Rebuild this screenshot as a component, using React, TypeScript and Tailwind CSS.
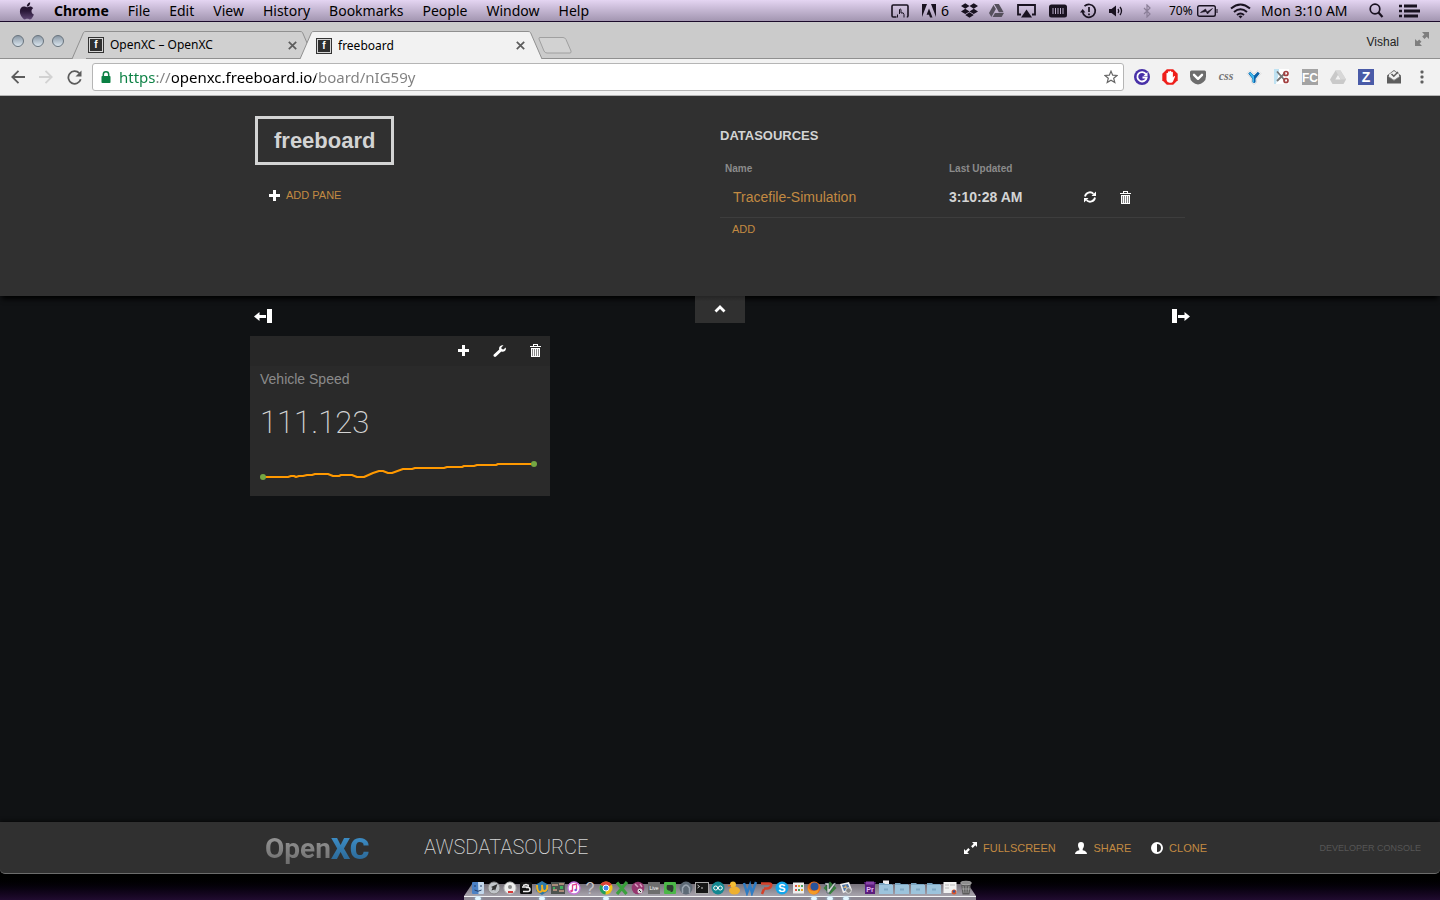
import React from "react";
import {
  SiDropbox,
  SiGoogledrive,
} from "react-icons/si";

type Kids = { children: React.ReactNode };

function Svg({ w, h, children }: Kids & { w: number; h: number }) {
  return (
    <svg width={w} height={h} viewBox={`0 0 ${w} ${h}`} className="block shrink-0" aria-hidden="true">
      {children}
    </svg>
  );
}

/* ---------- macOS menu bar ---------- */

const menus = ["File", "Edit", "View", "History", "Bookmarks", "People", "Window", "Help"];

function AppleLogo() {
  return (
    <Svg w={16} h={18}>
      <defs>
        <linearGradient id="apple" x1="0" y1="0" x2="0" y2="1">
          <stop offset="0" stopColor="#1d1226" />
          <stop offset="0.5" stopColor="#2a1838" />
          <stop offset="1" stopColor="#5d4672" />
        </linearGradient>
      </defs>
      <path
        fill="url(#apple)"
        d="M11.2 0.6c.1 1.1-.3 2.1-.9 2.8-.7.8-1.6 1.2-2.5 1.200-.1-1 .3-2 .9-2.700.7-.8 1.700-1.300 2.500-1.300zM14.200 6.300c-1.100.7-1.700 1.700-1.700 2.900 0 1.500.9 2.600 2.400 3.200-.4 1.200-1 2.300-1.700 3.300-.7.9-1.300 1.700-2.300 1.700s-1.400-.6-2.600-.6-1.700.6-2.600.6c-1 0-1.700-.9-2.400-1.800C1.800 13.900.9 11.700.9 9.500c0-3 1.900-4.900 4-4.900 1.200 0 2.200.7 3 .7s1.800-.8 3.200-.8c1.200 0 2.400.6 3.100 1.800z"
      />
    </Svg>
  );
}

function MenuBar() {
  return (
    <header className="flex h-[22px] items-center justify-between border-b border-[#1b0b2b] bg-linear-to-b from-[#e4d5f2] to-[#a396b1] pr-5 pl-[19px] font-['Noto_Sans','Lucida_Grande',sans-serif] text-[14px] leading-5 text-black">
      <nav className="flex items-center gap-[19px]" aria-label="Menu bar">
        <button type="button" aria-label="Apple menu">
          <AppleLogo />
        </button>
        <button type="button" className="font-bold">Chrome</button>
        {menus.map((m) => (
          <button type="button" key={m}>{m}</button>
        ))}
      </nav>
      <div className="flex items-center">
        <span className="flex w-[31px] items-center">
          <Svg w={18} h={14}>
            <path d="M5.500 13H2.200Q1 13 1 11.800V2.200Q1 1 2.200 1H15.800Q17 1 17 2.200V11.800Q17 13 15.800 13" fill="none" stroke="#191220" strokeWidth="1.600" />
            <path d="M6.500 13.500V10.500M8.500 10V5.500Q9.200 4.500 10 5.500V9Q12.800 8 13 10.500V13.500" fill="none" stroke="#191220" />
          </Svg>
        </span>
        <span className="flex w-[39px] items-center gap-[5px]">
          <Svg w={14} h={14}>
            <path fill="#191220" d="M0 0h5L0 13zM9 0h5v13zM7 4.500l3.500 9H8l-1-2.800H4.600z" />
          </Svg>
          6
        </span>
        <span className="w-7"><SiDropbox size={17} color="#191220" /></span>
        <span className="w-7"><SiGoogledrive size={15} color="#55505c" /></span>
        <span className="w-8">
          <Svg w={19} h={14}>
            <path d="M4 10.500H1V1H18V10.500H15" fill="none" stroke="#191220" strokeWidth="1.800" />
            <path d="M9.500 5.500L15 13.500H4z" fill="#191220" />
          </Svg>
        </span>
        <span className="w-[31px]">
          <Svg w={18} h={14}>
            <rect x="0" y="0.500" width="18" height="13" rx="2.500" fill="#191220" />
            <path d="M4 4v6M6.500 4v6M9 4v6M11.500 4v6M14 4v6" stroke="#b9abc8" />
          </Svg>
        </span>
        <span className="w-[28px]">
          <Svg w={17} h={16}>
            <path d="M2.600 9A6.400 6.400 0 1 0 4.500 3.200" fill="none" stroke="#191220" strokeWidth="1.700" />
            <path d="M0 7.500H5.500L2.700 11z" fill="#191220" transform="rotate(180 2.700 8.500)" />
            <path d="M9 4v5M9 10.500v1.700" stroke="#191220" strokeWidth="1.700" />
          </Svg>
        </span>
        <span className="w-[35px]">
          <Svg w={16} h={14}>
            <path d="M1 5h2.500L8 1.500v11L3.500 9H1z" fill="#191220" />
            <path d="M10 5q1.500 2 0 4M12 3q3 4 0 8" fill="none" stroke="#191220" strokeWidth="1.300" />
          </Svg>
        </span>
        <span className="w-[26px]">
          <Svg w={9} h={14}>
            <path d="M1 4l6 6-3 3V1l3 3-6 6" fill="none" stroke="#8b7f98" strokeWidth="1.200" />
          </Svg>
        </span>
        <span className="flex w-[61px] items-center gap-1 text-[12px]">
          70%
          <Svg w={21} h={12}>
            <rect x="0.700" y="0.700" width="17.600" height="10.600" rx="1.800" fill="none" stroke="#191220" strokeWidth="1.400" />
            <path d="M19.500 4h1v4h-1z" fill="#191220" />
            <path d="M3.500 7.500L8.500 4l1.500 3 5.500-3.500-5 5.500L9 6.500z" fill="#191220" stroke="#191220" strokeWidth="0.600" />
          </Svg>
        </span>
        <span className="w-[31px]">
          <Svg w={21} h={16}>
            <g fill="none" stroke="#191220" strokeWidth="2">
              <path d="M1 5.500Q10.500-2.500 20 5.500" />
              <path d="M4 9Q10.500 3.500 17 9" />
              <path d="M7 12Q10.500 9 14 12" />
            </g>
            <path d="M10.500 15.500l-2-2.300q2-1.300 4 0z" fill="#191220" />
          </Svg>
        </span>
        <span className="w-[108px] whitespace-nowrap">Mon 3:10 AM</span>
        <button type="button" aria-label="Spotlight search" className="w-[30px]">
          <Svg w={15} h={15}>
            <circle cx="6" cy="6" r="4.800" fill="none" stroke="#191220" strokeWidth="1.700" />
            <path d="M9.500 9.500l4 4.500" stroke="#191220" strokeWidth="2.200" />
          </Svg>
        </button>
        <button type="button" aria-label="Notification center">
          <Svg w={21} h={14}>
            <path d="M0 2h3M0 7h3M0 12h3" stroke="#191220" strokeWidth="2.600" />
            <path d="M5 2h13M5 7h16M5 12h14" stroke="#191220" strokeWidth="3" />
          </Svg>
        </button>
      </div>
    </header>
  );
}

/* ---------- Chrome tab strip and toolbar ---------- */

function Favicon() {
  return (
    <span className="flex size-4 shrink-0 items-center justify-center border border-[#333] bg-[#d5d5d5] p-px">
      <span className="flex size-full items-center justify-center bg-[#2f2f2f] font-['Liberation_Sans',sans-serif] text-[10px] leading-3 font-bold text-white">
        f
      </span>
    </span>
  );
}

function Tab({ title, active }: { title: string; active?: boolean }) {
  const fill = active ? "#f2f2f2" : "#d0d0d0";
  return (
    <div className={active ? "relative -mb-px -ml-[14px] flex h-7 w-[242px]" : "flex h-[27px] w-[242px]"}>
      <Svg w={14} h={28}>
        <path d="M0 28L11.500 1.500Q12 0.500 14 0.500V28z" fill={fill} />
        <path d="M0 28L11.500 1.500Q12 0.500 14 0.500" fill="none" stroke="#909090" />
      </Svg>
      <div className={active ? "flex min-w-0 flex-1 items-center border-t border-[#909090] bg-[#f2f2f2]" : "flex min-w-0 flex-1 items-center border-t border-[#909090] bg-[#d0d0d0]"}>
        <span className="ml-[2px] flex"><Favicon /></span>
        <button type="button" role="tab" aria-selected={!!active} className="ml-[6px] flex-1 truncate text-left text-[12px] leading-4 text-black">
          {title}
        </button>
        <button type="button" aria-label={`Close ${title}`} className="mr-[3px]">
          <Svg w={9} h={9}>
            <path d="M0.800 0.800l7.400 7.400M8.200 0.800L0.800 8.200" stroke="#5c5c5c" strokeWidth="1.700" />
          </Svg>
        </button>
      </div>
      <Svg w={14} h={28}>
        <path d="M14 28L2.500 1.500Q2 0.500 0 0.500V28z" fill={fill} />
        <path d="M14 28L2.500 1.500Q2 0.500 0 0.500" fill="none" stroke="#909090" />
      </Svg>
    </div>
  );
}

function TrafficLight({ label }: { label: string }) {
  return (
    <button type="button" aria-label={label} className="size-3 rounded-full border border-[#68737d] bg-linear-to-b from-[#8b99a6] to-[#dbe6ef]" />
  );
}

function TabStrip() {
  return (
    <div className="flex h-[37px] items-end border-b border-[#909090] bg-[#cbcbcb]">
      <div className="flex gap-2 pb-[11px] pl-3">
        <TrafficLight label="Close window" />
        <TrafficLight label="Minimize window" />
        <TrafficLight label="Zoom window" />
      </div>
      <div className="ml-2 flex items-end" role="tablist">
        <Tab title="OpenXC – OpenXC" />
        <Tab title="freeboard" active />
      </div>
      <button type="button" aria-label="New tab" className="-ml-1 pb-1">
        <Svg w={34} h={17}>
          <path d="M2 0.500H25Q27 0.500 28 2.500L33 14Q33.500 16 32 16H9Q7 16 6 14L1 2Q0.500 0.500 2 0.500z" fill="#d2d2d2" stroke="#a0a0a0" />
        </Svg>
      </button>
      <div className="ml-auto flex items-start gap-4 self-start pt-[10px] pr-[10px]">
        <button type="button" className="pt-px font-['Liberation_Sans',Arial,sans-serif] text-[12px] leading-[18px] text-[#222]">Vishal</button>
        <button type="button" aria-label="Full screen">
          <Svg w={15} h={15}>
            <g fill="#7e7e7e">
              <path d="M7 0h7v7l-2.300-2.300-2.200 2.200-2.300-2.300 2.200-2.200z" />
              <path d="M0 7l2.300 2.300 1.900-1.900 2.300 2.300-1.900 1.900L7 14H0z" />
            </g>
          </Svg>
        </button>
      </div>
    </div>
  );
}

const extensions: { name: string; icon: React.ReactNode }[] = [
  {
    name: "Grammar checker",
    icon: (
      <>
        <circle cx="8" cy="8" r="8" fill="#4831a8" />
        <path d="M12 5.200A4.700 4.700 0 1 0 12.700 8.500H8.500" fill="none" stroke="#fff" strokeWidth="1.800" />
        <path d="M13.500 3v4h-4z" fill="#fff" />
      </>
    ),
  },
  {
    name: "Ad blocker",
    icon: (
      <>
        <path d="M4.800 0.300h6.400L15.700 4.800v6.400l-4.500 4.500H4.800L0.300 11.200V4.800z" fill="#ee1f1b" />
        <path d="M4.500 8V4.200q.8-.9 1.500 0V2.800q.9-.9 1.600 0V2.200q.9-.9 1.700 0V3.200q.8-.8 1.600 0V8.500l1-1.300q1-.5 1.200.4L11 12.500q-.7 1.200-2 1.300H7.500Q5 13.500 4.500 11z" fill="#fff" />
      </>
    ),
  },
  {
    name: "Pocket",
    icon: (
      <>
        <path d="M1.500 1.500h13q1.500 0 1.500 1.500v4.500q0 3.500-2.500 5.500T8 15.500Q5 15 2.500 13T0 7.500V3q0-1.500 1.500-1.500z" fill="#6d6d6d" />
        <path d="M4 5.800l4 4 4-4" fill="none" stroke="#fff" strokeWidth="2.400" strokeLinecap="round" strokeLinejoin="round" />
      </>
    ),
  },
  {
    name: "CSS viewer",
    icon: (
      <text x="8" y="11" textAnchor="middle" fontFamily="Liberation Serif, serif" fontStyle="italic" fontWeight="700" fontSize="12" fill="#777">css</text>
    ),
  },
  {
    name: "Y extension",
    icon: (
      <>
        <path d="M1 4.500l3-3L8 5l4-3.500 3 3L10.500 10v3.500L8 15.500l-2.500-2V10z" fill="#fff" stroke="#d4d4d4" strokeWidth="0.800" />
        <path d="M2.200 4.500L4.200 2.800 8 6.500l3.800-3.700 2 1.700L9.600 9.700v3.500L8 14.300l-1.600-1.100V9.700z" fill="#0b62a8" />
        <path d="M3 4.200L4.200 3.300 8 7v7L6.800 13V9.500z" fill="#3fb9ee" />
      </>
    ),
  },
  {
    name: "Web clipper",
    icon: (
      <>
        <rect width="15" height="15" fill="#fff" />
        <path d="M0 0h5v4L2 15H0z" fill="#bfe2f2" />
        <path d="M3 2.500L11 11.500M3 12L11 4" stroke="#777" strokeWidth="1.800" />
        <circle cx="12" cy="4.500" r="2" fill="none" stroke="#a34141" strokeWidth="1.700" />
        <circle cx="12" cy="11.500" r="2" fill="none" stroke="#a34141" strokeWidth="1.700" />
      </>
    ),
  },
  {
    name: "FC",
    icon: (
      <>
        <rect width="16" height="16" fill="#a3a3a3" />
        <text x="8" y="13" textAnchor="middle" fontFamily="Liberation Sans, sans-serif" fontWeight="700" fontSize="12" fill="#fff">FC</text>
      </>
    ),
  },
  {
    name: "Drive",
    icon: (
      <>
        <path d="M5.500 1.500h5L16 10.500 13.500 15H2.500L0 10.500z" fill="#c9c9c9" />
        <path d="M8 6l2.700 4.500H5.300z" fill="#f2f2f2" />
        <path d="M5.500 1.500h5L16 10.500H11z" fill="#d8d8d8" />
      </>
    ),
  },
  {
    name: "Z",
    icon: (
      <>
        <rect width="16" height="16" fill="#4a5ba8" />
        <text x="8" y="13" textAnchor="middle" fontFamily="Liberation Sans, sans-serif" fontWeight="700" fontSize="14" fill="#fff">Z</text>
      </>
    ),
  },
  {
    name: "Inbox",
    icon: (
      <>
        <path d="M1 6.500L8 1l7 5.500V14.500H1z" fill="#5d5d5d" />
        <path d="M3 5.500L8 2l5 3.500V8L8 11 3 8z" fill="#f2f2f2" />
        <path d="M5.500 5l2.300 2.300L12 3" fill="none" stroke="#5d5d5d" strokeWidth="1.500" />
        <path d="M1 6.500l7 5 7-5" fill="none" stroke="#8d8d8d" strokeWidth="0.800" />
      </>
    ),
  },
  {
    name: "Chrome menu",
    icon: (
      <g fill="#5f5f5f">
        <rect x="6.500" y="1.500" width="3" height="3" rx="1" />
        <rect x="6.500" y="6.500" width="3" height="3" rx="1" />
        <rect x="6.500" y="11.500" width="3" height="3" rx="1" />
      </g>
    ),
  },
];

function Toolbar() {
  return (
    <div className="flex h-[37px] items-center border-b border-[#b4b4b4] bg-[#f2f2f2] pr-[10px] pl-[11px]">
      <div className="flex w-[81px] shrink-0 items-center gap-[14px]">
        <button type="button" aria-label="Back">
          <Svg w={14} h={14}>
            <path d="M14 7H1.500M7.500 0.800L1.300 7l6.200 6.200" fill="none" stroke="#5c5c5c" strokeWidth="1.800" />
          </Svg>
        </button>
        <button type="button" aria-label="Forward" disabled>
          <Svg w={14} h={14}>
            <path d="M0 7h12.500M6.500 0.800L12.700 7l-6.200 6.200" fill="none" stroke="#d2d2d2" strokeWidth="1.800" />
          </Svg>
        </button>
        <button type="button" aria-label="Reload">
          <Svg w={15} h={15}>
            <path d="M12.300 3.200A6.300 6.300 0 1 0 13.700 9.300" fill="none" stroke="#5c5c5c" strokeWidth="1.800" />
            <path d="M14.500 0.500V6.500H8.500z" fill="#5c5c5c" />
          </Svg>
        </button>
      </div>
      <div className="flex h-7 min-w-0 flex-1 items-center rounded-[3px] border border-[#b5b5b5] bg-white pr-[5px] pl-2">
        <label htmlFor="address" aria-label="Address">
          <Svg w={10} h={12}>
            <path d="M2.300 5.500V3.500a2.700 2.700 0 0 1 5.400 0V5.500" fill="none" stroke="#0a8043" strokeWidth="1.500" />
            <rect x="0.500" y="5" width="9" height="7" rx="0.800" fill="#0a8043" />
          </Svg>
        </label>
        <input
          id="address"
          type="text"
          defaultValue="https://openxc.freeboard.io/board/nIG59y"
          spellCheck={false}
          className="ml-2 h-6 min-w-0 flex-1 bg-[linear-gradient(90deg,#0a8043_36px,#808080_36px,#808080_53px,#000_53px,#000_197px,#808080_197px)] bg-clip-text font-['Noto_Sans','Lucida_Grande',sans-serif] text-[15px] leading-6 text-transparent outline-none"
        />
        <button type="button" aria-label="Bookmark this page">
          <Svg w={14} h={14}>
            <path d="M7 1.200l1.700 4 4.300.3-3.300 2.800 1.100 4.300L7 10.300l-3.800 2.300 1.100-4.300L1 5.500l4.300-.3z" fill="none" stroke="#666" strokeWidth="1.200" />
          </Svg>
        </button>
      </div>
      <div className="ml-[10px] flex gap-3">
        {extensions.map((e) => (
          <button type="button" key={e.name} aria-label={e.name}>
            <Svg w={16} h={16}>{e.icon}</Svg>
          </button>
        ))}
      </div>
    </div>
  );
}

/* ---------- freeboard icons ---------- */

function PlusIcon() {
  return (
    <Svg w={11} h={11}>
      <path d="M4 0h3v4h4v3H7v4H4V7H0V4h4z" fill="#fff" />
    </Svg>
  );
}

function TrashIcon() {
  return (
    <Svg w={11} h={13}>
      <path d="M3 0h5v2h3v1H0V2h3zM4 1v1h3V1z" fill="#fff" fillRule="evenodd" />
      <path d="M1 4h9v9H1z" fill="#fff" />
      <path d="M2.500 5v7M4.500 5v7M6.500 5v7M8.500 5v7" stroke="#777" strokeWidth="0.900" />
    </Svg>
  );
}

function RefreshIcon() {
  return (
    <Svg w={12} h={12}>
      <path d="M1 5.500A5 5 0 0 1 9.500 2.800M11 6.500A5 5 0 0 1 2.500 9.200" fill="none" stroke="#fff" strokeWidth="1.800" />
      <path d="M12 0.500v4.500H7.500zM0 11.500V7h4.500z" fill="#fff" />
    </Svg>
  );
}

function WrenchIcon() {
  return (
    <Svg w={13} h={12}>
      <path d="M10.500 0.300L8.300 2.500l.4 1.600 1.700.5 2.300-2.200q.7 2.200-.8 3.600-1.500 1.200-3.600.6L3 11.600q-1 .8-2 0t-.2-2L6.200 4.400Q5.700 2.500 7 1.200 8.600-.3 10.500.3z" fill="#fff" />
    </Svg>
  );
}

const sparkline =
  "M3 20H28L31 19H34L36 20L39 19H43L47 18H52L55 17H68L73 19H79L81 18H92L97 20H104L113 16L119 14H123L128 16H132L143 12H152L155 11H184L187 10H202L204 9H214L217 8H236L238 7H274";

function ActionLink({ icon, children }: Kids & { icon: React.ReactNode }) {
  return (
    <button type="button" className="flex cursor-pointer items-center gap-[6px] text-[11px] leading-4 text-[#c28a42]">
      {icon}
      {children}
    </button>
  );
}

function BoardHeader() {
  return (
    <section className="bg-[#303030] pb-[59px] shadow-[0_5px_5px_-2px_#000]">
      <div className="mx-auto grid max-w-[930px] grid-cols-2">
        <div className="flex flex-col items-start pt-5">
          <h1 className="border-[3px] border-[#d3d4d4] px-4 text-[22px] leading-[43px] font-bold text-[#d3d4d4]">freeboard</h1>
          <div className="mt-[22px] ml-[14px]">
            <ActionLink icon={<PlusIcon />}>ADD PANE</ActionLink>
          </div>
        </div>
        <div className="pt-8">
          <h2 className="text-[13px] leading-4 font-bold text-[#d3d4d4]">DATASOURCES</h2>
          <table className="mt-4 w-full table-fixed border-collapse text-left">
            <colgroup>
              <col className="w-[224px]" />
              <col className="w-[135px]" />
              <col />
            </colgroup>
            <thead>
              <tr className="text-[10px] leading-4 font-bold text-[#8b8b8b]">
                <th className="px-[5px] py-px">Name</th>
                <th className="px-[5px] py-px">Last Updated</th>
                <th aria-label="Actions" />
              </tr>
            </thead>
            <tbody>
              <tr className="h-[39px] border-b border-[#3d3d3d] text-[14px] leading-5">
                <td className="pl-[13px]">
                  <button type="button" className="text-[#c28a42]">Tracefile-Simulation</button>
                </td>
                <td className="pl-[5px] font-bold text-[#d3d4d4]">3:10:28 AM</td>
                <td className="pl-[5px]">
                  <div className="flex items-center gap-6">
                    <button type="button" aria-label="Refresh datasource"><RefreshIcon /></button>
                    <button type="button" aria-label="Delete datasource"><TrashIcon /></button>
                  </div>
                </td>
              </tr>
            </tbody>
          </table>
          <button type="button" className="mt-[3px] ml-3 block text-[11px] leading-4 text-[#c28a42]">ADD</button>
        </div>
      </div>
    </section>
  );
}

function Board() {
  return (
    <main className="flex-1">
      <div className="mx-auto max-w-[940px]">
        <div className="grid h-10 grid-cols-[1fr_50px_1fr] items-start">
          <button type="button" aria-label="Remove column" className="mt-[13px] ml-1 justify-self-start">
            <Svg w={18} h={14}>
              <path d="M13 0h5v14h-5zM0 7.500L5.500 3v3H12v3H5.500v3z" fill="#fff" />
            </Svg>
          </button>
          <button type="button" aria-label="Collapse header" className="flex h-[27px] items-center justify-center bg-linear-to-b from-[#252525] to-[#303030] to-20%">
            <Svg w={12} h={8}>
              <path d="M1.500 6.500L6 2l4.500 4.500" fill="none" stroke="#fff" strokeWidth="2.800" />
            </Svg>
          </button>
          <button type="button" aria-label="Add column" className="mt-[13px] justify-self-end">
            <Svg w={18} h={14}>
              <path d="M0 0h5v14H0zM18 7.500L12.500 3v3H6v3h6.500v3z" fill="#fff" />
            </Svg>
          </button>
        </div>
        <article className="w-[300px] bg-[#2a2a2a]">
          <div className="flex h-[30px] items-center justify-end gap-6 bg-[#272727] pr-[9px]">
            <button type="button" aria-label="Add widget"><PlusIcon /></button>
            <button type="button" aria-label="Edit pane"><WrenchIcon /></button>
            <button type="button" aria-label="Delete pane"><TrashIcon /></button>
          </div>
          <div className="px-[10px] py-[3px]">
            <h2 className="text-[14px] leading-5 text-[#8b8b8b]">Vehicle Speed</h2>
            <p className="pt-[14px] font-['Roboto',sans-serif] text-[31px] leading-10 font-extralight text-[#d3d4d4]">111.123</p>
            <svg width="280" height="36" viewBox="0 0 280 36" className="mt-[14px] block" role="img" aria-label="Vehicle speed history">
              <path d={sparkline} fill="none" stroke="#ff9900" strokeWidth="2" strokeLinejoin="round" />
              <circle cx="3" cy="20" r="3" fill="#75a743" />
              <circle cx="274" cy="7" r="3" fill="#75a743" />
            </svg>
          </div>
        </article>
      </div>
    </main>
  );
}

function BoardFooter() {
  return (
    <footer className="grid h-[52px] grid-cols-[265fr_159fr_540fr_243fr_214fr_19fr] items-center rounded-b-[5px] border-b border-[#6c6c6c] bg-[#303030] shadow-[0_0_5px_#000]">
      <a href="#openxc" aria-label="OpenXC" className="col-start-2 flex items-center pt-[2px] font-['Roboto',sans-serif] leading-8 font-bold">
        <span className="bg-linear-to-b from-[#9a9a9a] to-[#6c6c6c] bg-clip-text text-[28px] text-transparent">Open</span>
        <span className="bg-linear-to-b from-[#3f93cd] to-[#29628f] bg-clip-text text-[30px] font-black text-transparent">XC</span>
      </a>
      <h2 className="pb-[2px] font-['Roboto',sans-serif] text-[20px] leading-6 font-extralight text-[#d3d4d4]">AWSDATASOURCE</h2>
      <nav className="flex items-center justify-between whitespace-nowrap" aria-label="Board actions">
        <ActionLink
          icon={
            <Svg w={13} h={12}>
              <path d="M8 0h5v5l-1.700-1.700L8.700 5.900 7.100 4.300 9.700 1.700zM0 7l1.700 1.700L4.300 6.100 5.900 7.700 3.300 10.300 5 12H0z" fill="#fff" />
            </Svg>
          }
        >
          FULLSCREEN
        </ActionLink>
        <ActionLink
          icon={
            <Svg w={12} h={12}>
              <path d="M6 0q3 0 3 3.300Q9 5.500 7.700 7v1.300Q12 9.300 12 12H0q0-2.700 4.300-3.700V7Q3 5.500 3 3.300 3 0 6 0z" fill="#fff" />
            </Svg>
          }
        >
          SHARE
        </ActionLink>
        <ActionLink
          icon={
            <Svg w={12} h={12}>
              <circle cx="6" cy="6" r="5" fill="none" stroke="#fff" strokeWidth="2" />
              <path d="M6 1a5 5 0 0 0 0 10z" fill="#fff" />
            </Svg>
          }
        >
          CLONE
        </ActionLink>
      </nav>
      <button type="button" className="justify-self-end text-[9px] leading-4 text-[#565656]">DEVELOPER CONSOLE</button>
    </footer>
  );
}

/* ---------- Dock ---------- */

const folder = (
  <>
    <path d="M1 3h5l1 1h7v10H1z" fill="#7ba6c2" />
    <path d="M1 5h14v9H1z" fill="#9dc4dc" />
    <path d="M6 8.500h4v2H6z" fill="#7fa9c5" />
  </>
);

const dockApps: { name: string; running?: boolean; art: React.ReactNode }[] = [
  { name: "Finder", running: true, art: <><rect x="2" y="2" width="12" height="12" rx="1" fill="#4a80c4" /><path d="M8 2h5q1 0 1 1v10q0 1-1 1H8.500z" fill="#c4d8ec" /><path d="M5 5v2M11 5v2M4.500 10q3.500 2.500 7 0" stroke="#223c66" fill="none" /></> },
  { name: "Launchpad", art: <><circle cx="8" cy="8" r="6" fill="#c2c6ca" stroke="#888" /><path d="M11.500 4L5 7l1.500.7L5.500 10.500 8.500 9.500 9 11z" fill="#333" /></> },
  { name: "Disc burner", art: <><circle cx="8" cy="8" r="6" fill="#efefef" stroke="#bbb" /><circle cx="8" cy="7" r="2" fill="#888" /><path d="M6 11h5v2H6z" fill="#d63a3a" /></> },
  { name: "Deja", art: <><rect x="2" y="2" width="12" height="12" rx="1.500" fill="#111" /><path d="M4 7h7M5 11.500h5a2 2 0 0 0 0-4H8M5 5.500l3-1 3 1" stroke="#eee" strokeWidth="1.500" fill="none" /></> },
  { name: "Swirl", running: true, art: <><path d="M8 1L14 4.500 14 11 8 15 2 11V4.500z" fill="#2d79a8" /><path d="M3 5q0 7 3 7t2-7q0 7 3 6t2-6" stroke="#f0b020" strokeWidth="2" fill="none" /></> },
  { name: "Control board", art: <><rect x="1" y="2" width="14" height="12" fill="#4c524e" /><path d="M2 5h6M9 4h5M3 10h4M9 11h5" stroke="#c99e88" strokeWidth="1.500" /><path d="M10 6h3v3h-3zM3 7h2v2H3z" fill="#3fae5c" /></> },
  { name: "iTunes", art: <><circle cx="8" cy="8" r="6" fill="#fff" stroke="#c774dc" strokeWidth="1.300" /><path d="M6.500 11V5l4-1v6" stroke="#e0418f" strokeWidth="1.300" fill="none" /><circle cx="5.500" cy="11" r="1.300" fill="#e0418f" /><circle cx="9.700" cy="10" r="1.300" fill="#7a5ce0" /></> },
  { name: "Unknown application", art: <text x="8" y="14" textAnchor="middle" fontFamily="Liberation Sans, sans-serif" fontSize="16" fill="#c6c6cb">?</text> },
  { name: "Chrome", running: true, art: <><circle cx="8" cy="8" r="6.500" fill="#f0c419" /><path d="M8 8L2.400 4.700A6.500 6.500 0 0 1 13.600 4.700z" fill="#dc4437" /><path d="M8 8L2.400 4.700A6.500 6.500 0 0 0 7.500 14.500z" fill="#1fa05d" /><circle cx="8" cy="8" r="3" fill="#4586ec" stroke="#fff" /></> },
  { name: "Excel", art: <><path d="M3 2.500L12.500 14M13 2L3 14" stroke="#3aa03c" strokeWidth="3.200" /></> },
  { name: "Colloquy", art: <><circle cx="8" cy="8" r="6.300" fill="#96366f" /><path d="M5 4l3 3M10 4l2 3" stroke="#d9a0c2" strokeWidth="1.500" /><circle cx="10" cy="11" r="2.500" fill="#ddd" /><path d="M9 10l2 2" stroke="#222" /></> },
  { name: "Live", art: <><rect x="2" y="2" width="12" height="12" fill="#6e6e6e" /><text x="8" y="10" textAnchor="middle" fontFamily="Liberation Sans, sans-serif" fontSize="5" fill="#fff">Live</text></> },
  { name: "Evernote", art: <><rect x="2" y="2" width="12" height="12" rx="1" fill="#4cb748" /><path d="M5 5h5q1.500 0 1.500 3T10 12H8.500V10.500Q7 11 5.500 10T5 5z" fill="#2e3a31" /></> },
  { name: "Steel", art: <><circle cx="8" cy="8" r="6.500" fill="#5e6a76" /><path d="M4.500 13V8q3.500-6 7 0v5" stroke="#9aa4b0" strokeWidth="1.500" fill="none" /></> },
  { name: "Terminal", art: <><rect x="1.500" y="2.500" width="13" height="11" fill="#161616" stroke="#aaa" /><path d="M3.500 5l2 1.500-2 1.500M7 8h2" stroke="#ddd" strokeWidth="0.900" fill="none" /></> },
  { name: "Arduino", art: <><circle cx="8" cy="8" r="6.500" fill="#128790" /><circle cx="5.700" cy="8" r="2" fill="none" stroke="#fff" /><circle cx="10.300" cy="8" r="2" fill="none" stroke="#fff" /></> },
  { name: "Duck", art: <><circle cx="7" cy="4.500" r="3" fill="#f3bd35" /><ellipse cx="8.500" cy="10.500" rx="5.500" ry="4" fill="#eeb030" /><path d="M2 5h3v1.500H2z" fill="#dd6b20" /></> },
  { name: "Word", art: <path d="M2 3l3 10 3-8 2 8 4-11" stroke="#2f7cc4" strokeWidth="2.500" fill="none" /> },
  { name: "PowerPoint", art: <path d="M4 14L6 9M3 3.500h8q3 0 2 2.500t-4 2.500H6" stroke="#d4412a" strokeWidth="2.500" fill="none" /> },
  { name: "Skype", art: <><circle cx="8" cy="8" r="6.500" fill="#12a5ea" /><text x="8" y="12" textAnchor="middle" fontFamily="Liberation Sans, sans-serif" fontWeight="700" fontSize="11" fill="#fff">S</text></> },
  { name: "Color grid", art: <><rect x="3" y="2.500" width="11" height="11" fill="#eee" /><path d="M5 5h2v2H5zM5 9h2v2H5z" fill="#de5246" /><path d="M8 5h2v2H8zM11 9h2v2h-2z" fill="#e8a72a" /><path d="M11 5h2v2h-2zM8 9h2v2H8z" fill="#4a9f5b" /></> },
  { name: "Firefox", running: true, art: <><circle cx="8" cy="8" r="6.500" fill="#e66b1e" /><circle cx="8.500" cy="6.500" r="4" fill="#29549c" /><path d="M2 5q0 6 6 6 3 0 5-2-1 5-5 5.500Q2 14 2 8z" fill="#f39b26" /></> },
  { name: "MacVim", running: true, art: <><path d="M8 1.500L14.500 8 8 14.500 1.500 8z" fill="#36803b" /><path d="M3 3h4v6l5-6h2L7 13H5V5H3z" fill="#cfd6cf" stroke="#234" strokeWidth="0.500" /></> },
  { name: "Image viewer", running: true, art: <><path d="M2 4l9-2 3 8-9 3z" fill="#f1f1f1" /><path d="M4 5l6-1 2 5-6 2z" fill="#4f75a7" /><path d="M5 8l3-3 1 3z" fill="#d6b277" /><circle cx="10.500" cy="10.500" r="2.800" fill="#888" stroke="#ddd" /></> },
];

const dockFiles: { name: string; art: React.ReactNode }[] = [
  { name: "Premiere Pro", art: <><path d="M3 5L2 2h12l-1 3v9H3z" fill="#5b1c7c" /><path d="M4 1.500h8v3H4z" fill="#8a44aa" /><text x="8" y="12" textAnchor="middle" fontFamily="Liberation Sans, sans-serif" fontWeight="700" fontSize="7" fill="#e5b7f5">Pr</text></> },
  { name: "Documents", art: <><path d="M5 0.500h6v6H5z" fill="#eee" />{folder}</> },
  { name: "Folder 1", art: folder },
  { name: "Folder 2", art: folder },
  { name: "Folder 3", art: folder },
  { name: "Screenshot", art: <><rect x="1.500" y="2" width="13" height="11" fill="#f1f1f1" /><path d="M3 5h4M8 5h5M3 8h4" stroke="#bbb" /><circle cx="12" cy="12" r="2.500" fill="#d8552d" /><circle cx="12" cy="11.500" r="1.200" fill="#35569c" /></> },
  { name: "Trash", art: <><path d="M3 3h10l-1.500 11.500h-7z" fill="#5b5b5b" /><ellipse cx="8" cy="3" rx="5.500" ry="1.800" fill="#8d8d8d" stroke="#bbb" strokeWidth="0.700" /><path d="M5 6l1 7M8 6v7M11 6l-1 7M4 9h8" stroke="#aaa" strokeWidth="0.800" /></> },
];

function DockItem({ name, art, running }: { name: string; art: React.ReactNode; running?: boolean }) {
  return (
    <button type="button" aria-label={name} className="flex w-4 flex-col items-center">
      <Svg w={16} h={16}>{art}</Svg>
      <span className={running ? "mt-px h-[3px] w-[6px] rounded-full bg-[#e2f6ff] shadow-[0_0_3px_#9fdcff]" : "mt-px h-[3px]"} />
    </button>
  );
}

function Dock() {
  return (
    <div className="flex h-[26px] items-end justify-center bg-linear-to-b from-black to-[#210c30]">
      <nav className="relative flex items-end pr-[2px] pl-[6px]" aria-label="Dock">
        <span className="absolute inset-x-0 bottom-0 h-4 bg-linear-to-b from-[#77727b] to-[#a5a1aa] to-70% [clip-path:polygon(8px_0,calc(100%-8px)_0,100%_12px,100%_100%,0_100%,0_12px)]" />
        <span className="absolute inset-x-0 bottom-0 h-1 border-t border-[#f4f4f6] bg-[#8d8894]" />
        <span className="relative flex">
          {dockApps.map((a) => <DockItem key={a.name} {...a} />)}
        </span>
        <span className="relative w-2" />
        <span className="relative flex">
          {dockFiles.map((a) => <DockItem key={a.name} {...a} />)}
        </span>
      </nav>
    </div>
  );
}

export default function App() {
  return (
    <div className="flex min-h-screen flex-col bg-black font-['Liberation_Sans',Arial,sans-serif]">
      <MenuBar />
      <div className="flex flex-1 flex-col rounded-b-[5px] bg-[#101214]">
        <div className="font-['Noto_Sans','Lucida_Grande',sans-serif]">
          <TabStrip />
          <Toolbar />
        </div>
        <BoardHeader />
        <Board />
        <BoardFooter />
      </div>
      <Dock />
    </div>
  );
}
